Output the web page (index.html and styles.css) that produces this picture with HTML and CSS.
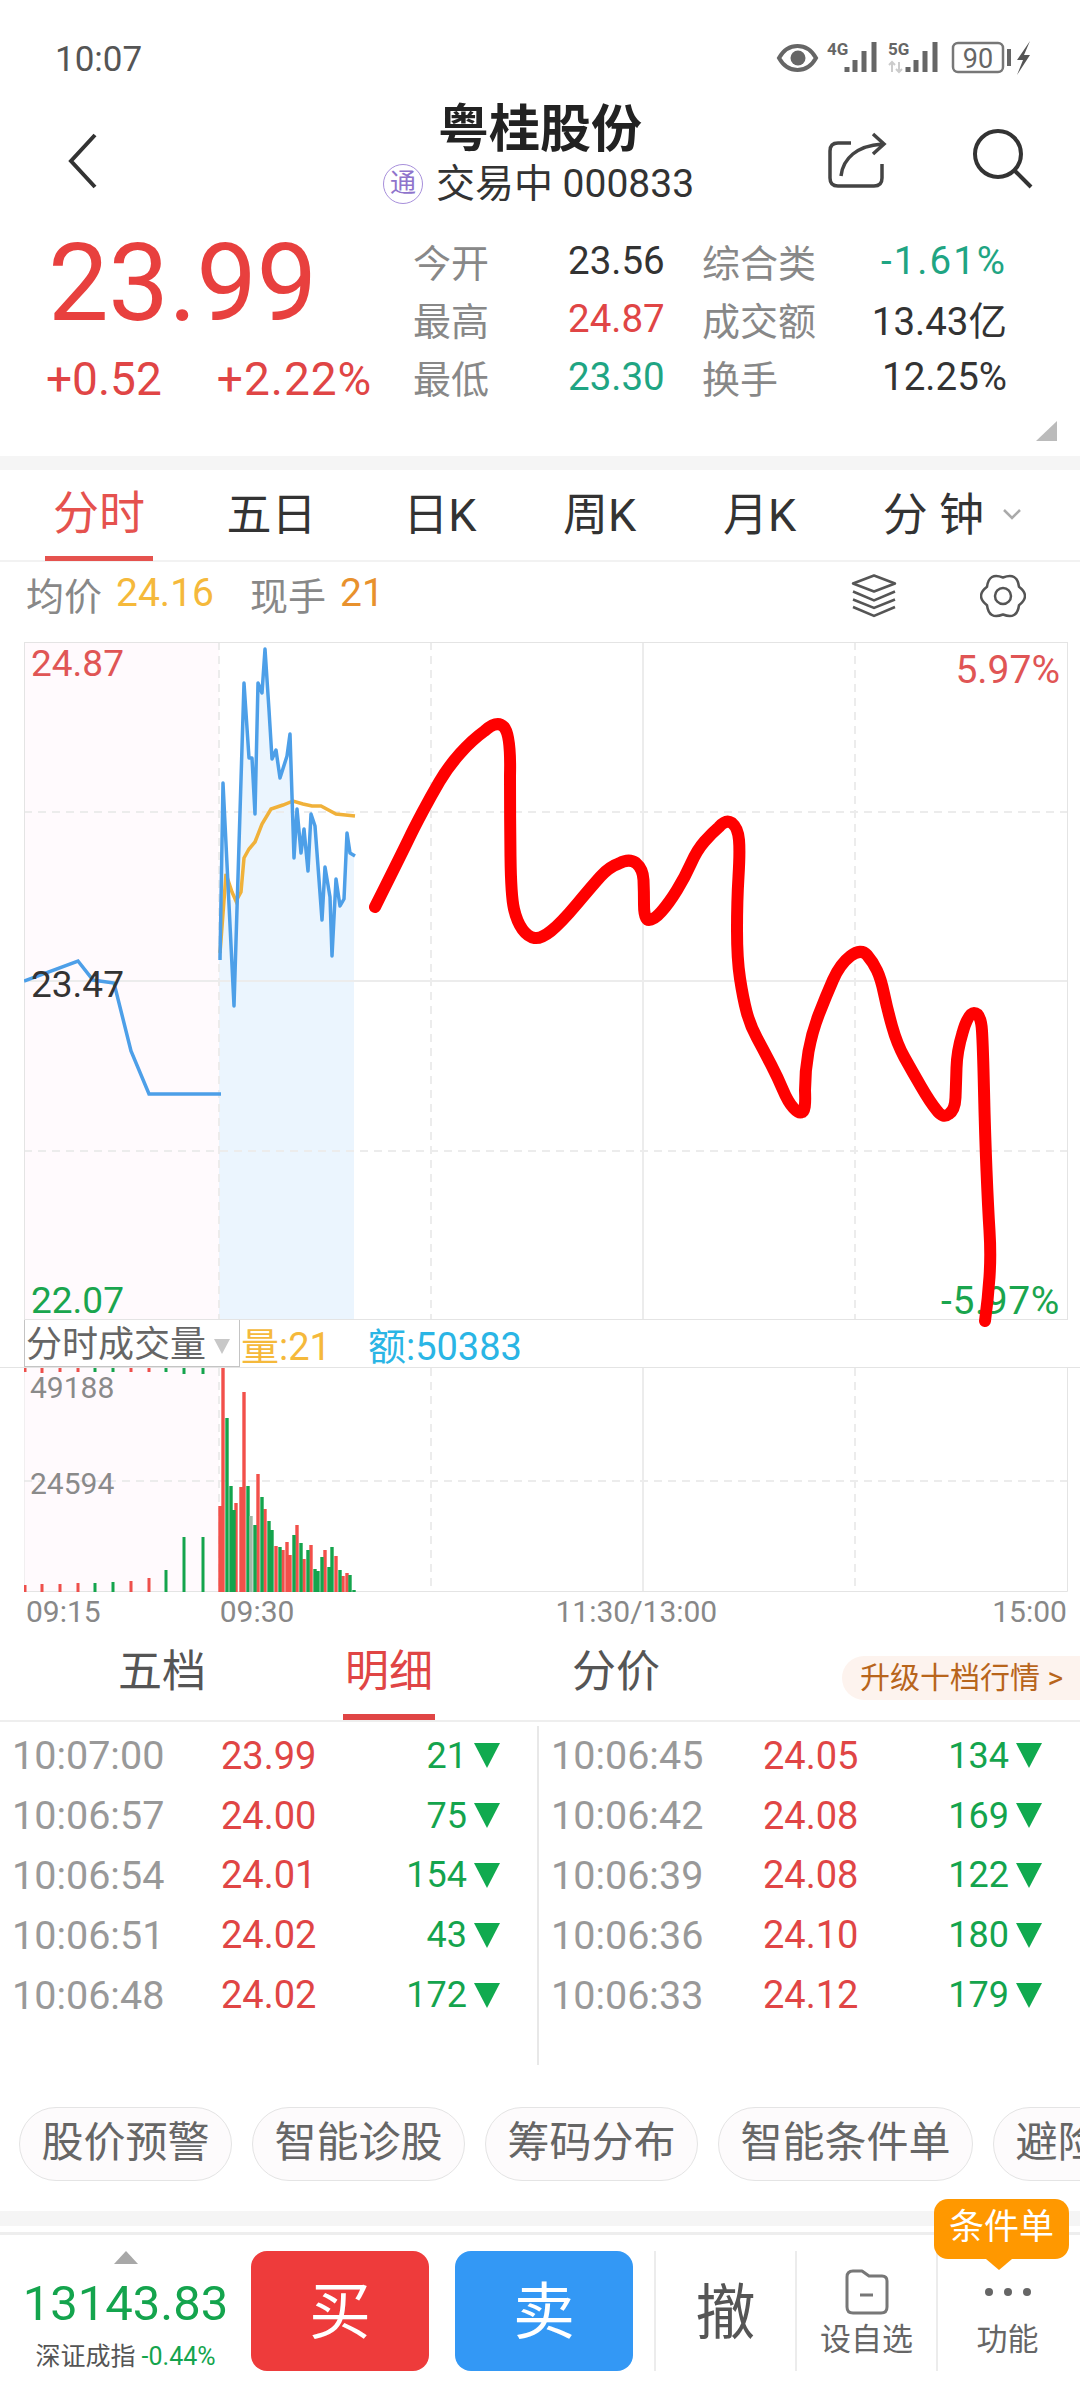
FILE: index.html
```html
<!DOCTYPE html>
<html lang="zh-CN">
<head>
    <meta charset="UTF-8">
    <meta name="viewport" content="width=device-width, initial-scale=1.0">
    <title>粤桂股份 000833</title>
    <link rel="stylesheet" href="styles.css">
</head>
<body>

<div class="status-bar">
    <span class="clock">10:07</span>
    <svg class="status-icons" width="260" height="40" viewBox="770 40 260 40">
        <path d="M779 60 C788 44 807 44 816 60 C807 76 788 76 779 60 Z" fill="none" stroke="#666" stroke-width="4"/>
        <circle cx="798" cy="60" r="7.5" fill="#666"/>
        <text x="827" y="57" class="net-text">4G</text>
        <path d="M847 74V69M855 74V62M864 74V53M874 74V44" stroke="#666" stroke-width="5" fill="none"/>
        <text x="888" y="57" class="net-text">5G</text>
        <path d="M892 74V64M889 67L892 64L895 67M899 64V74M896 71L899 74L902 71" stroke="#ccc" stroke-width="2" fill="none"/>
        <path d="M908 74V69M916 74V62M925 74V53M935 74V44" stroke="#666" stroke-width="5" fill="none"/>
        <rect x="953" y="45" width="50" height="29" rx="5" fill="none" stroke="#777" stroke-width="2.5"/>
        <text x="978" y="70" class="batt-text">90</text>
        <rect x="1007" y="51" width="4" height="17" fill="#666"/>
        <path d="M1030 43L1017 62L1023 62L1017 77L1030 57L1024 57Z" fill="#555"/>
    </svg>
</div>

<div class="top-bar">
    <svg class="back-icon" width="32" height="56" viewBox="0 0 32 56"><path d="M28 2L4 28L28 54" fill="none" stroke="#333" stroke-width="4"/></svg>
    <div class="top-title">
        <div class="stock-name">粤桂股份</div>
        <div class="stock-sub"><span class="tong">通</span><span>交易中 000833</span></div>
    </div>
    <svg class="share-icon" width="60" height="58" viewBox="0 0 60 58">
        <path d="M24 11H11Q3 11 3 19V46Q3 54 11 54H47Q55 54 55 46V32" fill="none" stroke="#444" stroke-width="3.5"/>
        <path d="M14 44C16 26 30 14 55 12M46 2L57 12L46 22" fill="none" stroke="#444" stroke-width="3.5"/>
    </svg>
    <svg class="search-icon" width="62" height="62" viewBox="0 0 62 62">
        <circle cx="26" cy="26" r="23" fill="none" stroke="#333" stroke-width="4"/>
        <path d="M43 43L59 59" stroke="#333" stroke-width="4"/>
    </svg>
</div>

<div class="quote">
    <div class="quote-left">
        <div class="last-price">23.99</div>
        <div class="change"><span>+0.52</span><span class="change-pct">+2.22%</span></div>
    </div>
    <div class="quote-grid">
        <span class="lbl">今开</span><span class="val">23.56</span><span class="lbl">综合类</span><span class="val end teal wide">-1.61%</span>
        <span class="lbl">最高</span><span class="val red">24.87</span><span class="lbl">成交额</span><span class="val end">13.43亿</span>
        <span class="lbl">最低</span><span class="val teal">23.30</span><span class="lbl">换手</span><span class="val end">12.25%</span>
    </div>
    <div class="corner"></div>
</div>

<div class="band"></div>

<div class="tabs">
    <span class="tab active">分时</span>
    <span class="tab">五日</span>
    <span class="tab">日K</span>
    <span class="tab">周K</span>
    <span class="tab">月K</span>
    <span class="tab">分 钟<svg class="tab-arrow" width="20" height="12" viewBox="0 0 20 12"><path d="M2 2L10 10L18 2" fill="none" stroke="#aaa" stroke-width="2.5"/></svg></span>
</div>

<div class="avg-row">
    <span class="lbl">均价</span><span class="avg-val">24.16</span>
    <span class="lbl now-lbl">现手</span><span class="now-val">21</span>
    <svg class="layers-icon" width="46" height="44" viewBox="0 0 46 44">
        <path d="M23 1.5L44 9.5L23 17.5L2 9.5Z" fill="none" stroke="#555" stroke-width="2.5" stroke-linejoin="round"/>
        <path d="M2 17.5L23 26.5L44 17.5M2 25.5L23 34L44 25.5M2 33L23 42L44 33" fill="none" stroke="#555" stroke-width="2.5"/>
    </svg>
    <svg class="gear-icon" width="46" height="46" viewBox="0 0 46 46">
        <path d="M23 4.5Q37 -1.2 39 13.75Q51 23 39 32.25Q37 47.2 23 41.5Q9 47.2 7 32.25Q-5 23 7 13.75Q9 -1.2 23 4.5Z" fill="none" stroke="#555" stroke-width="2.5" stroke-linejoin="round"/>
        <circle cx="23" cy="23" r="8" fill="none" stroke="#555" stroke-width="2.5"/>
    </svg>
</div>

<div class="price-chart">
    <svg class="chart-svg" width="1044" height="678" viewBox="24 642 1044 678">
        <rect x="24" y="642" width="195" height="678" fill="#fffafd"/>
        <path d="M219 1320V960L223 783L234 1006L244 683L249 758H252L255 814L258 683L262 693L265 649L269 710L272 759L276 750L280 778L287 756L290 734L294 858L297 809L301 853L304 829L308 871L311 814L315 826L322 920L325 867L330 897L332 956L336 879L340 906L344 899L347 833L350 853L354 856V1320Z" fill="#ebf5fe"/>
        <rect x="219" y="900" width="135" height="420" fill="#ebf5fe"/>
        <path d="M24 812H1067M24 1151H1067M219 642V1320M431 642V1320M855 642V1320" fill="none" stroke="#ececec" stroke-width="2" stroke-dasharray="8 6"/>
        <path d="M24 981H1067M643 642V1320" fill="none" stroke="#ececec" stroke-width="2"/>
        <rect x="24.5" y="642.5" width="1043" height="677" fill="none" stroke="#e4e4e4"/>
        <polyline points="220,953 226,874 232,892 236,901 241,892 244,858 249,849 255,842 262,824 271,809 283,805 293,801 303,804 312,806 321,806 336,814 355,816" fill="none" stroke="#f0b13a" stroke-width="3.5"/>
        <polyline points="24,981 78,961 93,980 114,983 131,1051 149,1094 221,1094" fill="none" stroke="#4d9fe8" stroke-width="3.5"/>
        <polyline points="220,960 223,783 234,1006 244,683 249,758 252,758 255,814 258,683 262,693 265,649 269,710 272,759 276,750 280,778 287,756 290,734 294,858 297,809 301,853 304,829 308,871 311,814 315,826 322,920 325,867 330,897 332,956 336,879 340,906 344,899 347,833 350,853 355,856" fill="none" stroke="#4d9fe8" stroke-width="3.5" stroke-linejoin="round"/>
    </svg>
    <span class="chart-lbl high">24.87</span>
    <span class="chart-lbl mid">23.47</span>
    <span class="chart-lbl low">22.07</span>
    <span class="chart-lbl pct-high">5.97%</span>
    <span class="chart-lbl pct-low">-5.97%</span>
</div>

<div class="vol-head">
    <div class="vol-select">分时成交量<i class="vol-caret"></i></div>
    <span class="vol-amount">量:21</span>
    <span class="vol-money">额:50383</span>
</div>

<div class="vol-chart">
    <svg class="chart-svg" width="1044" height="224" viewBox="24 1368 1044 224">
        <rect x="24" y="1368" width="195" height="224" fill="#fffafd"/>
        <path d="M24 1481H1067M219 1368V1592M431 1368V1592M855 1368V1592" fill="none" stroke="#ececec" stroke-width="2" stroke-dasharray="8 6"/>
        <path d="M643 1368V1592" fill="none" stroke="#ececec" stroke-width="2"/>
        <path d="M24 1591.5H1067.5V1368M24 1368V1592" fill="none" stroke="#e4e4e4"/>
        <!-- pre-open ticks, then the bars -->
        <path d="M25 1368V1372M42 1368V1373M60 1368V1372M78 1368V1372M131 1368V1372M149 1368V1372M25 1585V1592M42 1584V1592M60 1584V1592M78 1583V1592M131 1581V1592M149 1578V1592" stroke="#ee4f4b" stroke-width="3" fill="none"/>
        <path d="M95 1368V1372M113 1368V1372M166 1368V1372M184 1368V1374M203 1368V1374M95 1583V1592M113 1582V1592M166 1570V1592M184 1537V1592M203 1537V1592" stroke="#14a44d" stroke-width="3" fill="none"/>
        <path d="M220 1506V1592M223 1368V1592M236 1503V1592M241 1487V1592M244 1392V1592M258 1474V1592M265 1509V1592M276 1546V1592M283 1550V1592M287 1542V1592M290 1555V1592M297 1525V1592M304 1559V1592M311 1545V1592M325 1550V1592M336 1556V1592M343 1576V1592M347 1573V1592" stroke="#f2504a" stroke-width="3.4" fill="none"/>
        <path d="M227 1418V1592M231 1486V1592M234 1510V1592M248 1486V1592M255 1525V1592M262 1497V1592M269 1521V1592M272 1530V1592M280 1547V1592M294 1535V1592M301 1543V1592M308 1550V1592M315 1569V1592M318 1571V1592M322 1557V1592M329 1567V1592M332 1547V1592M340 1570V1592M350 1575V1592M354 1590V1592" stroke="#14a44d" stroke-width="3.4" fill="none"/>
        <path d="M251 1516V1592" stroke="#a3b8a8" stroke-width="3.4" fill="none"/>
    </svg>
    <span class="vol-lbl vol-top">49188</span>
    <span class="vol-lbl vol-half">24594</span>
</div>

<div class="time-axis">
    <span>09:15</span>
    <span class="t-open">09:30</span>
    <span class="t-noon">11:30/13:00</span>
    <span class="t-close">15:00</span>
</div>

<div class="detail-tabs">
    <span class="d-tab">五档</span>
    <span class="d-tab active">明细</span>
    <span class="d-tab">分价</span>
    <span class="upgrade">升级十档行情 &gt;</span>
</div>

<div class="ticks">
    <div class="tick-col">
        <div class="tick"><span class="t">10:07:00</span><span class="p">23.99</span><span class="v">21</span><i class="down"></i></div>
        <div class="tick"><span class="t">10:06:57</span><span class="p">24.00</span><span class="v">75</span><i class="down"></i></div>
        <div class="tick"><span class="t">10:06:54</span><span class="p">24.01</span><span class="v">154</span><i class="down"></i></div>
        <div class="tick"><span class="t">10:06:51</span><span class="p">24.02</span><span class="v">43</span><i class="down"></i></div>
        <div class="tick"><span class="t">10:06:48</span><span class="p">24.02</span><span class="v">172</span><i class="down"></i></div>
    </div>
    <div class="tick-col second">
        <div class="tick"><span class="t">10:06:45</span><span class="p">24.05</span><span class="v">134</span><i class="down"></i></div>
        <div class="tick"><span class="t">10:06:42</span><span class="p">24.08</span><span class="v">169</span><i class="down"></i></div>
        <div class="tick"><span class="t">10:06:39</span><span class="p">24.08</span><span class="v">122</span><i class="down"></i></div>
        <div class="tick"><span class="t">10:06:36</span><span class="p">24.10</span><span class="v">180</span><i class="down"></i></div>
        <div class="tick"><span class="t">10:06:33</span><span class="p">24.12</span><span class="v">179</span><i class="down"></i></div>
    </div>
</div>

<div class="chips">
    <span class="chip">股价预警</span>
    <span class="chip">智能诊股</span>
    <span class="chip">筹码分布</span>
    <span class="chip">智能条件单</span>
    <span class="chip">避险策略</span>
</div>

<div class="band thin"></div>

<div class="bottom-bar">
    <div class="index-box">
        <i class="index-up"></i>
        <div class="index-num">13143.83</div>
        <div class="index-name">深证成指 <span>-0.44%</span></div>
    </div>
    <div class="trade buy">买</div>
    <div class="trade sell">卖</div>
    <div class="act cancel">撤</div>
    <div class="act">
        <svg width="44" height="46" viewBox="0 0 44 46">
            <path d="M8 2H17L24 7H37Q42 7 42 12V38Q42 44 36 44H8Q2 44 2 38V8Q2 2 8 2Z" fill="none" stroke="#777" stroke-width="3" stroke-linejoin="round"/>
            <path d="M15 26H28" fill="none" stroke="#777" stroke-width="3"/>
        </svg>
        <span>设自选</span>
    </div>
    <div class="act">
        <svg width="48" height="46" viewBox="0 0 48 46"><circle cx="5" cy="23" r="4" fill="#666"/><circle cx="24" cy="23" r="4" fill="#666"/><circle cx="43" cy="23" r="4" fill="#666"/></svg>
        <span>功能</span>
    </div>
    <div class="cond-tag">条件单</div>
</div>

<svg class="scribble" width="1080" height="1340" viewBox="0 0 1080 1340">
    <path d="M375 907Q403 851 408.5 839.5Q414 828 422.5 812Q431 796 439.5 781.5Q448 767 460 753.5Q472 740 484.5 731Q497 720 504 727Q511 735 510 776Q510 817 510.5 856.5Q511 896 514 909Q517 922 522.5 929.5Q528 937 534.5 938Q541 939 551 931Q561 923 576.5 904.5Q592 886 600.5 876.5Q609 867 619 863.5Q629 858 636 863Q643 869 643.5 880Q644 891 644 904.5Q644 920 649 920Q654 920 661.5 911.5Q669 903 677 890Q685 877 691 863.5Q697 850 704.5 841.5Q712 833 719 827Q726 819 732 823Q738 828 739 840Q740 852 738.5 876.5Q737 901 737 930Q737 959 740 978.5Q743 998 746.5 1011.5Q750 1025 757 1038Q764 1051 771 1064.5Q778 1078 783 1090Q788 1102 793.5 1108Q799 1114 802 1112Q806 1112 805 1090.5Q805 1071 808.5 1051.5Q812 1032 819 1014Q826 996 833 980Q840 964 850.5 956Q861 948 867 955Q873 962 877 970.5Q881 979 884 993.5Q887 1008 892 1026Q897 1044 904.5 1057.5Q912 1071 921 1086.5Q930 1102 936.5 1110Q943 1119 949 1114Q955 1110 955.5 1097.5Q956 1085 956.5 1068Q957 1051 962.5 1033Q968 1013 974 1013Q981 1013 982 1031Q983 1047 984 1090.5Q985 1134 986.5 1170.5Q988 1207 989.5 1231Q991 1255 989.5 1277Q988 1299 985 1321" fill="none" stroke="#ff0000" stroke-width="12" stroke-linecap="round" stroke-linejoin="round"/>
</svg>

</body>
</html>
```

FILE: styles.css
```css
* {
    box-sizing: border-box;
}

html, body {
    margin: 0;
    padding: 0;
}

body {
    position: relative;
    width: 1080px;
    height: 2388px;
    overflow: hidden;
    background: #fff;
    font-family: Roboto, "Noto Sans CJK SC", sans-serif;
    color: #333;
}

svg {
    display: block;
}

/* status bar */
.status-bar {
    height: 96px;
    padding: 22px 50px 0 55px;
    display: flex;
    justify-content: space-between;
    align-items: center;
}

.clock {
    font-size: 35px;
    color: #555;
}

.status-icons {
    margin-top: -2px;
}

.net-text {
    font: bold 17px Roboto, sans-serif;
    fill: #666;
}

.batt-text {
    font: 27px Roboto, sans-serif;
    fill: #666;
    text-anchor: middle;
}

/* title bar */
.top-bar {
    height: 122px;
    display: flex;
    align-items: center;
    position: relative;
    padding: 0 46px 0 67px;
}

.back-icon {
    margin-top: 8px;
}

.top-title {
    position: absolute;
    left: 0;
    right: 0;
    top: 4px;
    text-align: center;
}

.stock-name {
    font-size: 51px;
    font-weight: bold;
    line-height: 60px;
    color: #222;
}

.stock-sub {
    display: flex;
    justify-content: center;
    align-items: center;
    gap: 13px;
    font-size: 39px;
    line-height: 46px;
    margin-top: 1px;
    padding-right: 3px;
}

.tong {
    width: 40px;
    height: 40px;
    border: 1.5px solid #a78fdb;
    border-radius: 50%;
    color: #8f74cc;
    font-size: 26px;
    line-height: 36px;
    text-align: center;
}

.share-icon {
    margin-left: auto;
    margin-right: 85px;
    margin-top: 8px;
}

.search-icon {
    margin-top: 4px;
}

/* quote block */
.quote {
    height: 238px;
    display: flex;
    position: relative;
}

.quote-left {
    width: 413px;
    padding-left: 48px;
}

.last-price {
    font-size: 108px;
    line-height: 110px;
    color: #e8403e;
    margin-top: 10px;
    letter-spacing: -0.5px;
}

.change {
    display: flex;
    gap: 55px;
    font-size: 46px;
    line-height: 50px;
    color: #e04545;
    margin-left: -2px;
    margin-top: 16px;
    white-space: nowrap;
}

.change-pct {
    letter-spacing: 1px;
}

.quote-grid {
    display: grid;
    grid-template-columns: 155px 134px 120px 185px;
    grid-auto-rows: 58px;
    align-items: center;
    margin-top: 13px;
    height: 174px;
}

.lbl {
    color: #888;
    font-size: 38px;
}

.val {
    font-size: 38.5px;
}

.end {
    text-align: right;
}

.wide {
    letter-spacing: 2px;
}

.red {
    color: #e04545;
}

.teal {
    color: #1fa583;
}

.corner {
    position: absolute;
    right: 23px;
    bottom: 15px;
    width: 0;
    height: 0;
    border-left: 21px solid transparent;
    border-bottom: 20px solid #bbb;
}

.band {
    height: 14px;
    background: #f5f5f5;
}

/* period tabs */
.tabs {
    height: 92px;
    display: flex;
    justify-content: space-between;
    padding: 0 58px 0 45px;
    border-bottom: 2px solid #f2f2f2;
    font-size: 45px;
}

.tab {
    display: flex;
    align-items: center;
    height: 91px;
    padding-bottom: 8px;
    color: #333;
}

.tab.active {
    color: #e5524e;
    font-size: 46px;
    width: 108px;
    margin-right: -13px;
    justify-content: center;
    border-bottom: 5px solid #e5524e;
}

.tab-arrow {
    margin-left: 18px;
    margin-top: 4px;
}

/* average price row */
.avg-row {
    height: 80px;
    display: flex;
    align-items: center;
    padding: 0 0 18px 26px;
    font-size: 39px;
}

.avg-val {
    color: #f5b93b;
    margin-left: 14px;
}

.now-lbl {
    margin-left: 36px;
}

.now-val {
    color: #e8912d;
    margin-left: 14px;
}

.layers-icon {
    margin-left: auto;
    margin-top: 6px;
}

.gear-icon {
    margin-left: 83px;
    margin-right: 54px;
    margin-top: 6px;
}

/* minute chart */
.price-chart {
    position: relative;
    height: 678px;
    margin-left: 24px;
    width: 1044px;
}

.chart-lbl {
    position: absolute;
    font-size: 37px;
    line-height: 40px;
}

.high {
    left: 7px;
    top: 2px;
    color: #e05555;
}

.mid {
    left: 7px;
    top: 323px;
    color: #333;
}

.low {
    left: 7px;
    bottom: -1px;
    color: #1aa54e;
}

.pct-high {
    right: 8px;
    top: 8px;
    font-size: 39px;
    color: #e05555;
}

.pct-low {
    right: 8px;
    bottom: -1px;
    font-size: 39px;
    letter-spacing: 0.6px;
    color: #1aa54e;
}

/* volume header */
.vol-head {
    height: 48px;
    display: flex;
    align-items: center;
    padding-left: 24px;
    font-size: 38px;
    border-bottom: 1px solid #e4e4e4;
}

.vol-select {
    width: 216px;
    height: 47px;
    padding-left: 1px;
    border: 1px solid #c4c4c4;
    border-top: 0;
    color: #666;
    font-size: 36px;
    line-height: 50px;
    white-space: nowrap;
    position: relative;
}

.vol-caret {
    position: absolute;
    right: 9px;
    top: 19px;
    width: 0;
    height: 0;
    border-left: 8px solid transparent;
    border-right: 8px solid transparent;
    border-top: 15px solid #c8c8c8;
}

.vol-amount {
    color: #f5b93b;
    margin-left: 1px;
}

.vol-money {
    color: #2ab5e5;
    margin-left: 37px;
}

/* volume chart */
.vol-chart {
    position: relative;
    height: 224px;
    margin-left: 24px;
    width: 1044px;
}

.vol-lbl {
    position: absolute;
    left: 6px;
    font-size: 30px;
    line-height: 36px;
    color: #8a8a8a;
}

.vol-top {
    top: 2px;
}

.vol-half {
    top: 98px;
}

.time-axis {
    height: 42px;
    display: flex;
    align-items: center;
    padding: 0 0 4px 26px;
    font-size: 30px;
    color: #888;
}

.t-open {
    margin-left: 119px;
}

.t-noon {
    margin-left: 261px;
}

.t-close {
    margin-left: 275px;
}

/* detail tabs */
.detail-tabs {
    height: 88px;
    display: flex;
    align-items: center;
    border-bottom: 2px solid #eee;
    font-size: 44px;
    color: #555;
    padding-left: 118px;
    position: relative;
}

.d-tab {
    height: 86px;
    line-height: 76px;
}

.d-tab.active {
    color: #e04545;
    margin-left: 137px;
    padding: 0 2px;
    border-bottom: 6px solid #e04545;
}

.d-tab.active + .d-tab {
    margin-left: 137px;
}

.upgrade {
    position: absolute;
    right: 0;
    top: 22px;
    height: 44px;
    width: 238px;
    padding-left: 18px;
    background: #fdf3ee;
    border-radius: 22px 0 0 22px;
    color: #b8651b;
    font-size: 30px;
    line-height: 44px;
    white-space: nowrap;
}

/* tick list */
.ticks {
    height: 343px;
    display: flex;
    padding-top: 4px;
}

.tick-col {
    width: 539px;
    padding-left: 12px;
    border-right: 2px solid #e8e8e8;
}

.tick-col.second {
    width: 541px;
    border-right: 0;
}

.tick {
    height: 59.8px;
    display: flex;
    align-items: center;
    font-size: 38px;
}

.t {
    width: 209px;
    font-size: 39.5px;
    color: #999;
}

.p {
    width: 100px;
    color: #e04545;
}

.v {
    width: 146px;
    font-size: 36px;
    text-align: right;
    color: #14a44d;
}

.tick-col.second .t {
    width: 212px;
}

.down {
    width: 0;
    height: 0;
    margin-left: 7px;
    border-left: 13px solid transparent;
    border-right: 13px solid transparent;
    border-top: 25px solid #10aa4f;
}

/* shortcut chips */
.chips {
    height: 146px;
    padding: 42px 0 0 19px;
    display: flex;
    gap: 20px;
    overflow: hidden;
}

.chip {
    flex: none;
    height: 74px;
    padding: 0 21.5px;
    border: 1.5px solid #e4e4e4;
    border-radius: 37px;
    background: #fdfbfc;
    color: #666;
    font-size: 42px;
    line-height: 70px;
}

.band.thin {
    height: 24px;
    background: linear-gradient(#f5f5f5 15px, #fff 15px, #fff 21px, #eee 21px);
}

/* bottom bar */
.bottom-bar {
    height: 153px;
    position: relative;
    display: flex;
    padding-top: 16px;
}

.index-box {
    width: 251px;
    text-align: center;
    position: relative;
}

.index-up {
    display: block;
    width: 0;
    height: 0;
    margin: 0 auto;
    border-left: 12px solid transparent;
    border-right: 12px solid transparent;
    border-bottom: 13px solid #a8a8a8;
}

.index-num {
    font-size: 49px;
    line-height: 56px;
    color: #14a44d;
    margin-top: 12px;
}

.index-name {
    font-size: 25px;
    line-height: 30px;
    margin-top: 10px;
    color: #555;
    white-space: nowrap;
}

.index-name span {
    color: #14a44d;
}

.trade {
    width: 178px;
    height: 120px;
    border-radius: 16px;
    color: #fff;
    font-size: 62px;
    line-height: 124px;
    text-align: center;
}

.buy {
    background: #ee3b3b;
}

.sell {
    background: #3398f5;
    margin-left: 26px;
    margin-right: 21px;
}

.act {
    width: 141px;
    height: 120px;
    border-left: 2px solid #ececec;
    display: flex;
    flex-direction: column;
    align-items: center;
    justify-content: center;
    gap: 8px;
    font-size: 31px;
    line-height: 34px;
    color: #666;
    padding-top: 4px;
}

.act.cancel {
    font-size: 60px;
    line-height: 70px;
    color: #555;
    padding-top: 6px;
}

.cond-tag {
    position: absolute;
    left: 934px;
    top: -36px;
    width: 135px;
    height: 60px;
    border-radius: 14px;
    background: #ff9800;
    color: #fff;
    font-size: 35px;
    line-height: 58px;
    text-align: center;
}

.cond-tag::after {
    content: "";
    position: absolute;
    left: 52px;
    top: 60px;
    border-left: 13px solid transparent;
    border-right: 13px solid transparent;
    border-top: 11px solid #ff9800;
}

/* hand drawn line over the chart */
.scribble {
    position: absolute;
    left: 0;
    top: 0;
    pointer-events: none;
}
```
